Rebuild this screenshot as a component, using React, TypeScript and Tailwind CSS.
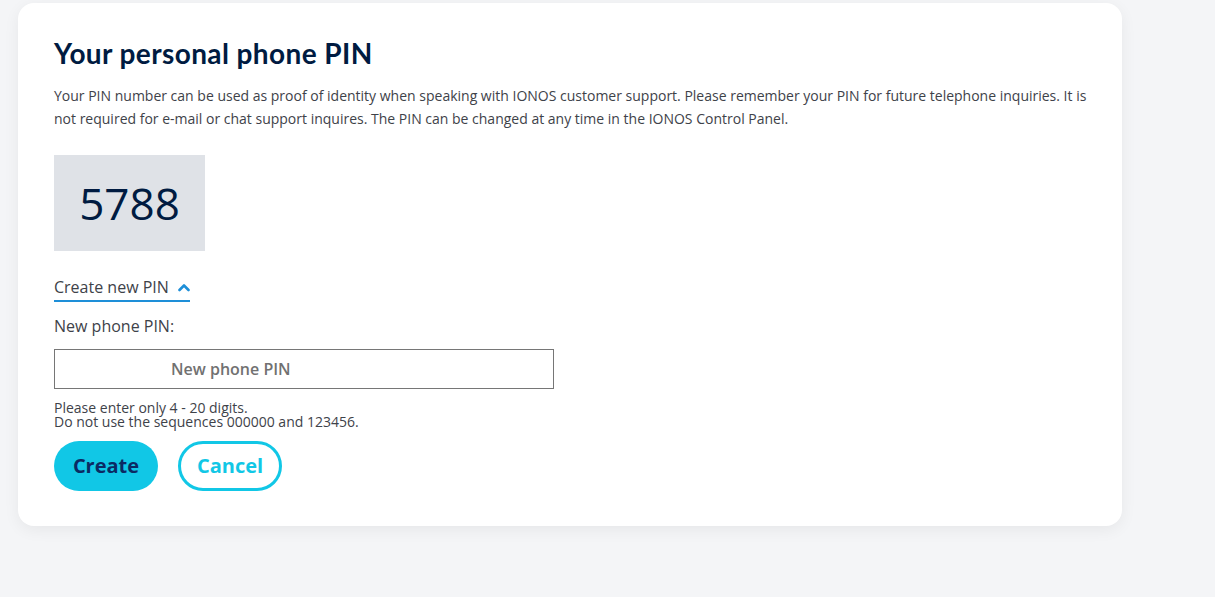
export default function App() {
  return (
    <div className="min-h-[597px] bg-[#f4f5f7] pl-[18px] pt-[3px] font-['Open_Sans',sans-serif]">
      <div className="w-[1104px] rounded-2xl bg-white px-9 pt-[34px] pb-[35px] shadow-[0_4px_16px_rgba(0,0,0,0.06)]">
        {/* Header */}
        <h1 className="font-['Lato',sans-serif] text-[28px] font-bold leading-8 tracking-[0.4px] text-[#001b41]">
          Your personal phone PIN
        </h1>
        <p className="-mr-3 mt-[15px] text-sm leading-[23px] text-[#3e4249]">
          Your PIN number can be used as proof of identity when speaking with IONOS customer support. Please remember your
          PIN for future telephone inquiries. It is not required for e-mail or chat support inquires. The PIN can be changed
          at any time in the IONOS Control Panel.
        </p>

        {/* Current PIN */}
        <div className="mt-[25px] flex h-24 w-[151px] items-center justify-center bg-[#dfe2e7]">
          <span className="text-[44px] leading-none text-[#001b41]">5788</span>
        </div>

        {/* Toggle */}
        <button className="mt-[24px] flex items-center gap-[9px] border-b-2 border-[#1e8fd8] pb-[1px] text-base leading-6 text-[#3e4249]">
          Create new PIN
          <svg width="12" height="9" viewBox="0 0 12 9" fill="none" className="mt-[1px]">
            <path d="M1.5 7 L6 2.5 L10.5 7" stroke="#1e8fd8" strokeWidth="2.6" strokeLinecap="round" strokeLinejoin="round" />
          </svg>
        </button>

        <p className="mt-[12px] text-base leading-6 text-[#3e4249]">New phone PIN:</p>

        <input
          placeholder="New phone PIN"
          className="mt-[11px] h-10 w-[500px] border border-[#767676] pl-[116px] text-base font-semibold text-[#717171] placeholder:text-[#717171] outline-none"
        />

        <div className="mt-[12px] text-sm leading-[14px] text-[#3e4249]">
          <p>Please enter only 4 - 20 digits.</p>
          <p>Do not use the sequences 000000 and 123456.</p>
        </div>

        {/* Actions */}
        <div className="mt-[12px] flex gap-5">
          <button className="h-[50px] w-[104px] rounded-full bg-[#11c7e6] text-xl font-bold text-[#0b2a63]">
            Create
          </button>
          <button className="h-[50px] w-[104px] rounded-full border-[3px] border-[#11c7e6] bg-white text-xl font-bold text-[#11c7e6]">
            Cancel
          </button>
        </div>
      </div>
    </div>
  );
}
